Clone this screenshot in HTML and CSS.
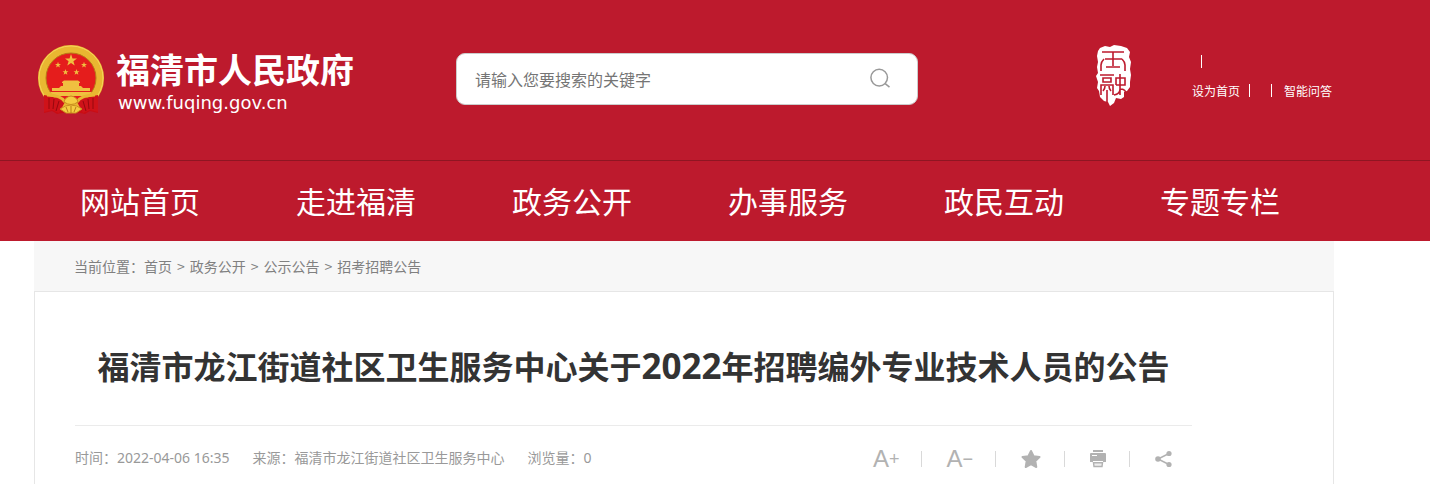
FILE: index.html
```
<!DOCTYPE html>
<html lang="zh-CN">

<head>
    <meta charset="UTF-8">
    <meta name="viewport" content="width=device-width, initial-scale=1.0">
    <title>福清市人民政府</title>
    <link rel="stylesheet" href="styles.css">
</head>

<body>
    <header class="header">
        <div class="top wrap">
            <a class="logo" href="#">
                <svg class="emblem" viewBox="0 0 68 70" aria-hidden="true">
                    <path d="M9 49 L59 49 L61 68 L53 66 L48 69 L34 66 L20 69 L15 66 L7 68 Z" fill="#c90d14" />
                    <circle cx="34" cy="33" r="29" fill="#e51d1c" stroke="#e9b731" stroke-width="8" />
                    <circle cx="34" cy="33" r="32" fill="none" stroke="#f6d55a" stroke-width="1" />
                    <circle cx="34" cy="33" r="25" fill="none" stroke="#b97a17" stroke-width="1" />
                    <g fill="#f0c040">
                        <path d="M34 9 L35.5 13.4 L40 13.4 L36.4 16.2 L37.7 20.5 L34 17.9 L30.3 20.5 L31.6 16.2 L28 13.4 L32.5 13.4 Z" id="star" />
                        <use href="#star" transform="translate(4 12.2) scale(.5)" />
                        <use href="#star" transform="translate(30 12.2) scale(.5)" />
                        <use href="#star" transform="translate(11.5 19.5) scale(.5)" />
                        <use href="#star" transform="translate(22.5 19.5) scale(.5)" />
                        <path d="M25 37 L27 35.5 H41 L43 37 V38 H25 Z M26 38 H42 V42 H26 Z" />
                        <path d="M24 41 H44 L46 43 H53 V46 H15 V43 H22 Z" />
                        <path d="M13 47 H55 L52 51 H16 Z" />
                    </g>
                    <path d="M7 50 Q20 52 28 57 L22 68 L15 65 L7 67 Z M61 50 Q48 52 40 57 L46 68 L53 65 L61 67 Z" fill="#cf1219" />
                    <path d="M12 53 V64 M17 54 L16 64 M22 56 L19 66 M56 53 V64 M51 54 L52 64 M46 56 L49 66" stroke="#96080e" />
                    <path d="M10 50 Q24 50 28 57 M58 50 Q44 50 40 57" fill="none" stroke="#e9b731" stroke-width="3" />
                    <path d="M27 57 Q28 52 34 51 Q40 52 41 57 Q34 62 27 57 Z" fill="#f5cc41" stroke="#c98f20" />
                    <path d="M23 64 Q34 56 45 64 L39 68 H29 Z" fill="#f5cc41" stroke="#c98f20" />
                    <path d="M34 61 V68 M29 62 L31 67 M39 62 L37 67" stroke="#b97a17" />
                </svg>
                <span class="site">
                    <strong>福清市人民政府</strong>
                    <span>www.fuqing.gov.cn</span>
                </span>
            </a>
            <form class="search" action="#">
                <input type="text" placeholder="请输入您要搜索的关键字" aria-label="请输入您要搜索的关键字">
                <button type="submit" aria-label="搜索">
                    <svg viewBox="0 0 20 20" fill="none" stroke="#999" stroke-width="1.5">
                        <circle cx="9.2" cy="9.6" r="8.3" />
                        <path d="M15.2 15.6 L19.5 19.2" />
                    </svg>
                </button>
            </form>
            <!-- 玉融印章 -->
            <svg class="seal" viewBox="0 0 36 62" aria-hidden="true">
                <path fill="#fff" d="M4 3 L9 1 L14 2 L18 0 L25 1 L31 3 L34 7 L33 12 L35 17 L34 24 L35 30 L34 37 L34 42 L31 46 L28 47 L28 52 L25 54 L20 53 L18 58 L14 61 L12 57 L8 56 L4 52 L3 46 L1 43 L2 37 L0 31 L2 28 L1 22 L2 17 L1 11 L2 6 Z" />
                <g fill="none" stroke="#bd1a2d" stroke-width="1.6">
                    <path d="M6 7 H28 M17 7 V21 M9 14 H26 M10 22 H24 M5 26 V20 Q5 17 8 14 M29 26 V20 Q29 17 26 14" />
                    <path d="M4 30 H18 M7 33 H15 V37 H7 Z M5 50 V40 H17 V50 M9 41 Q9 44 7 46 M13 41 Q13 44 15 46 M11 45 V57" />
                    <path d="M24 29 V50 M20 40 V33 H29 V40 H20 M18 50 Q24 49 24 44 Q30 44 30 49" />
                </g>
            </svg>
            <div class="links">
                <div class="line"><i></i></div>
                <div class="line"><a href="#">设为首页</a><i></i><i></i><a href="#">智能问答</a></div>
            </div>
        </div>
        <nav class="nav">
            <ul class="wrap">
                <li><a href="#">网站首页</a></li>
                <li><a href="#">走进福清</a></li>
                <li><a href="#">政务公开</a></li>
                <li><a href="#">办事服务</a></li>
                <li><a href="#">政民互动</a></li>
                <li><a href="#">专题专栏</a></li>
            </ul>
        </nav>
    </header>
    <main class="wrap">
        <div class="crumbs">
            <span>当前位置：<a href="#">首页</a></span>
            <span>&gt;</span>
            <a href="#">政务公开</a>
            <span>&gt;</span>
            <a href="#">公示公告</a>
            <span>&gt;</span>
            <a href="#">招考招聘公告</a>
        </div>
        <article class="article">
            <h1>福清市龙江街道社区卫生服务中心关于<span>2022</span>年招聘编外专业技术人员的公告</h1>
            <div class="info">
                <span>时间：2022-04-06 16:35</span>
                <span>来源：福清市龙江街道社区卫生服务中心</span>
                <span>浏览量：0</span>
                <div class="tools">
                    <button type="button" aria-label="放大字体">A<span>+</span></button>
                    <button type="button" aria-label="缩小字体">A<span>−</span></button>
                    <button type="button" aria-label="收藏">
                        <svg width="22" height="20" viewBox="1 0 22 20">
                            <path d="M12 2 L14.6 7.2 L20.5 8 L16.3 12 L17.3 18 L12 15.2 L6.7 18 L7.7 12 L3.5 8 L9.4 7.2 Z" fill="#b2b2b2" stroke="#b2b2b2" stroke-width="2" stroke-linejoin="round" />
                        </svg>
                    </button>
                    <button type="button" aria-label="打印">
                        <svg width="18" height="18" viewBox="0 0 18 18">
                            <path d="M4 0 H14 V2 H4 Z M2 3 H16 Q17 3 17 4 V12 H14 V11 H4 V12 H1 V4 Q1 3 2 3 Z" fill="#b2b2b2" />
                            <path d="M3 5.5 H8" stroke="#fff" />
                            <path d="M4.5 12.7 H13.5 L13 16.5 H5 Z" fill="#eee" stroke="#b2b2b2" stroke-width="1.4" />
                        </svg>
                    </button>
                    <button type="button" aria-label="分享">
                        <svg width="18" height="18" viewBox="0 0 18 18" fill="#b2b2b2">
                            <path d="M15 3.5 L4 9 L15 14.5" fill="none" stroke="#b2b2b2" stroke-width="1.5" />
                            <circle cx="15" cy="3.5" r="2.6" />
                            <circle cx="4" cy="9" r="2.8" />
                            <circle cx="15" cy="14.5" r="2.6" />
                        </svg>
                    </button>
                </div>
            </div>
        </article>
    </main>
</body>

</html>
```
FILE: styles.css
```
* {
    margin: 0;
    padding: 0;
    box-sizing: border-box;
}

body {
    font-family: "Noto Sans CJK SC", sans-serif;
    font-size: 14px;
    background: #fff;
}

a {
    color: inherit;
    text-decoration: none;
}

ul {
    list-style: none;
}

i {
    width: 1px;
    height: 13px;
    background: #fff;
}

button {
    border: 0;
    background: none;
    cursor: pointer;
}

.wrap {
    margin: 0 96px 0 34px;
}

.header {
    color: #fff;
    background: #bd1a2d;
}

.top {
    display: flex;
    align-items: center;
    height: 160px;
    padding: 0 0 2px 3px;
}

.logo {
    display: flex;
    align-items: center;
    gap: 11px;
    width: 419px;
    padding-top: 2px;
}

.emblem {
    width: 68px;
    height: 72px;
}

.site {
    display: flex;
    flex-direction: column;
}

.site strong {
    font-size: 34px;
    line-height: 46px;
}

.site span {
    padding-left: 2px;
    font-family: "DejaVu Sans", sans-serif;
    font-size: 18px;
    line-height: 22px;
}

.search {
    display: flex;
    align-items: center;
    width: 462px;
    height: 52px;
    border: 1px solid #ccc;
    border-radius: 9px;
    background: #fff;
}

.search input {
    flex: 1;
    height: 48px;
    padding-left: 18px;
    border: 0;
    outline: 0;
    background: none;
    font-family: inherit;
    font-size: 16px;
}

.search input::placeholder {
    color: #757575;
}

.search button {
    width: 74px;
    height: 50px;
}

.search svg {
    width: 20px;
    height: 20px;
}

.seal {
    width: 36px;
    height: 62px;
    margin: 0 0 6px auto;
}

.links {
    width: 142px;
    margin-left: 60px;
    padding-bottom: 6px;
    font-size: 12px;
    white-space: nowrap;
}

.line {
    display: flex;
    align-items: center;
    height: 29px;
}

.line i {
    margin: 0 12px 0 9px;
}

.nav {
    border-top: 1px solid #8f1522;
}

.nav ul {
    display: flex;
    padding-right: 4px;
}

.nav li {
    flex: 1;
    padding-left: 46px;
    font-size: 30px;
}

.nav a {
    display: block;
    height: 80px;
    line-height: 78px;
}

.crumbs {
    display: flex;
    gap: 5px;
    padding-left: 40px;
    color: #808080;
    background: #f7f7f7;
    line-height: 50px;
}

.article {
    padding: 0 141px 0 40px;
    border: 1px solid #e6e6e6;
    border-bottom: 0;
}

.article h1 {
    padding: 49px 0 36px;
    border-bottom: 1px solid #ebebeb;
    color: #333;
    font-size: 32px;
    line-height: 48px;
    text-align: center;
    white-space: nowrap;
}

.article h1 span {
    font-family: "Open Sans", sans-serif;
    font-size: 35px;
    line-height: 32px;
}

.info {
    display: flex;
    align-items: center;
    gap: 23px;
    height: 58px;
    padding-top: 4px;
    color: #999;
    font-family: "Noto Sans", "Noto Sans CJK SC", sans-serif;
    white-space: nowrap;
}

.tools {
    display: flex;
    align-items: center;
    margin-left: auto;
    padding-top: 4px;
}

.tools button {
    display: flex;
    align-items: center;
    height: 16px;
    padding: 0 22px 0 24px;
    border-right: 1px solid #d9d9d9;
    color: #b2b2b2;
    font-family: "Liberation Sans", sans-serif;
    font-size: 24px;
}

.tools button:last-child {
    padding-right: 20px;
    border-right: 0;
}

.tools span {
    font-size: 18px;
}
```
